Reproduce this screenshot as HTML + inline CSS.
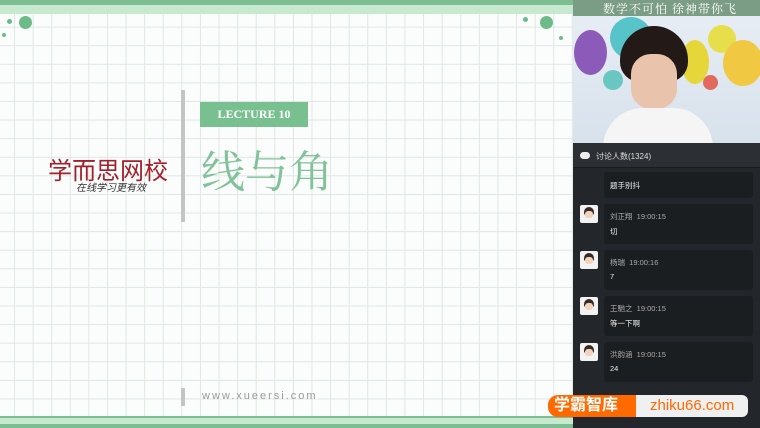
<!DOCTYPE html>
<html><head><meta charset="utf-8"><style>
*{margin:0;padding:0;box-sizing:border-box}
body{width:760px;height:428px;overflow:hidden;position:relative;background:#fff;font-family:"Liberation Sans","Noto Sans CJK SC",sans-serif}
.slide{position:absolute;left:0;top:0;width:573px;height:428px;background-color:#fbfdfc;
background-image:linear-gradient(#dfe6e3 1px,transparent 1px),linear-gradient(90deg,#dfe6e3 1px,transparent 1px);
background-size:18.6px 18.6px;background-position:14px 8px}
.abs{position:absolute}
.panel{position:absolute;left:573px;top:0;width:187px;height:428px;background:#23272b}
.msg{position:absolute;left:31px;width:149px;background:#1b1e21;border-radius:3px;color:#ddd;font-size:8px}
.av{position:absolute;left:7px;width:18px;height:18px;background:#f2f2f2;border-radius:2px}
.av i{position:absolute;left:4px;top:2px;width:10px;height:8px;background:#3a2a24;border-radius:5px 5px 2px 2px}
.av b{position:absolute;left:5px;top:6px;width:8px;height:7px;background:#f3d2bd;border-radius:3px}
.nm{position:absolute;left:6px;top:7px;color:#aaa;font-size:7.5px}
.tx{position:absolute;left:6px;top:22px;color:#eee;font-size:7.5px}
</style></head><body>
<div class="slide"></div>
<div class="abs" style="left:0;top:0;width:573px;height:5px;background:#7cbd92"></div>
<div class="abs" style="left:0;top:5px;width:573px;height:9px;background:#c6e9cf"></div>
<div class="abs" style="left:0;top:416px;width:573px;height:2px;background:#7cbd92"></div>
<div class="abs" style="left:0;top:418px;width:573px;height:6px;background:#c6e9cf"></div>
<div class="abs" style="left:0;top:424px;width:573px;height:4px;background:#7cbd92"></div>
<div class="abs" style="left:19px;top:16px;width:13px;height:13px;border-radius:50%;background:#6cbb88"></div>
<div class="abs" style="left:7px;top:19px;width:5px;height:5px;border-radius:50%;background:#6cbb88"></div>
<div class="abs" style="left:2px;top:33px;width:4px;height:4px;border-radius:50%;background:#6cbb88"></div>
<div class="abs" style="left:540px;top:16px;width:13px;height:13px;border-radius:50%;background:#6cbb88"></div>
<div class="abs" style="left:523px;top:17px;width:5px;height:5px;border-radius:50%;background:#6cbb88"></div>
<div class="abs" style="left:559px;top:36px;width:4px;height:4px;border-radius:50%;background:#6cbb88"></div>
<div class="abs" style="left:181px;top:90px;width:4px;height:132px;background:#c4c4c4"></div>
<div class="abs" style="left:181px;top:388px;width:4px;height:18px;background:#c4c4c4"></div>
<div class="abs" style="left:48px;top:151px;font-size:24px;color:#a2202c;letter-spacing:0px">学而思网校</div>
<div class="abs" style="left:76px;top:179px;font-size:10px;color:#333;font-style:italic">在线学习更有效</div>
<div class="abs" style="left:200px;top:102px;width:108px;height:25px;background:#78c08f;color:#fff;font-family:'Liberation Serif',serif;font-weight:bold;font-size:12px;line-height:25px;text-align:center">LECTURE 10</div>
<div class="abs" style="left:201px;top:147px;font-size:44px;color:#82c29a;font-family:'Liberation Serif','Noto Serif CJK SC',serif;line-height:52px">线与角</div>
<div class="abs" style="left:202px;top:390px;font-size:11px;color:#999;letter-spacing:2px">www.xueersi.com</div>
<div class="panel">
 <div class="abs" style="left:0;top:0;width:187px;height:143px;background:linear-gradient(180deg,#e8eef5,#d8e2ec)"></div>
 <div class="abs" style="left:0;top:0;width:187px;height:16px;background:#7b9d85"></div>
 <div class="abs" style="left:30px;top:0;font-size:12px;color:#fff;font-family:'Liberation Serif','Noto Serif CJK SC',serif;letter-spacing:1px">数学不可怕 徐神带你飞</div>
 <div class="abs" style="left:1px;top:30px;width:33px;height:45px;border-radius:50%;background:#8c5ab8"></div>
 <div class="abs" style="left:37px;top:17px;width:42px;height:42px;border-radius:50%;background:#56c4c8"></div>
 <div class="abs" style="left:108px;top:40px;width:28px;height:44px;border-radius:50%;background:#e7d63a"></div>
 <div class="abs" style="left:135px;top:25px;width:28px;height:28px;border-radius:50%;background:#e6de4a"></div>
 <div class="abs" style="left:150px;top:40px;width:40px;height:46px;border-radius:50%;background:#f1c842"></div>
 <div class="abs" style="left:30px;top:70px;width:20px;height:20px;border-radius:50%;background:#6ac6c0"></div>
 <div class="abs" style="left:130px;top:75px;width:15px;height:15px;border-radius:50%;background:#e16a5c"></div>
 <div class="abs" style="left:47px;top:26px;width:68px;height:56px;border-radius:34px 34px 20px 20px;background:#231a17"></div>
 <div class="abs" style="left:58px;top:54px;width:46px;height:55px;border-radius:20px;background:#eac3ad"></div>
 <div class="abs" style="left:30px;top:108px;width:110px;height:40px;border-radius:40px 40px 0 0;background:#f5f5f5"></div>
 <div class="abs" style="left:0;top:143px;width:187px;height:25px;background:#2c3035;border-bottom:1px solid #1a1c1e"></div>
 <div class="abs" style="left:7px;top:152px;width:10px;height:7px;border-radius:4px;background:#eee"></div>
 <div class="abs" style="left:23px;top:151px;font-size:8px;color:#ddd">讨论人数(1324)</div>
 <div class="msg" style="top:172px;height:26px"><div class="tx" style="top:8px">题手别抖</div></div>
 <div class="av" style="top:205px"><i></i><b></b></div>
 <div class="msg" style="top:204px;height:40px"><div class="nm">刘正翔&nbsp;&nbsp;19:00:15</div><div class="tx">切</div></div>
 <div class="av" style="top:251px"><i></i><b></b></div>
 <div class="msg" style="top:250px;height:40px"><div class="nm">杨瑞&nbsp;&nbsp;19:00:16</div><div class="tx">7</div></div>
 <div class="av" style="top:297px"><i></i><b></b></div>
 <div class="msg" style="top:296px;height:40px"><div class="nm">王馳之&nbsp;&nbsp;19:00:15</div><div class="tx">等一下啊</div></div>
 <div class="av" style="top:343px"><i></i><b></b></div>
 <div class="msg" style="top:342px;height:40px"><div class="nm">洪韵涵&nbsp;&nbsp;19:00:15</div><div class="tx">24</div></div>
</div>
<div class="abs" style="left:548px;top:395px;width:90px;height:22px;background:#ff6a00;border-radius:10px 0 0 10px;color:#fff;font-weight:bold;font-size:16px;line-height:22px;padding-left:6px">学霸智库</div>
<div class="abs" style="left:636px;top:395px;width:112px;height:22px;background:#f0f0f0;border-radius:0 6px 6px 0;color:#ff6a00;font-size:15px;line-height:22px;padding-left:14px">zhiku66.com</div>
</body></html>
